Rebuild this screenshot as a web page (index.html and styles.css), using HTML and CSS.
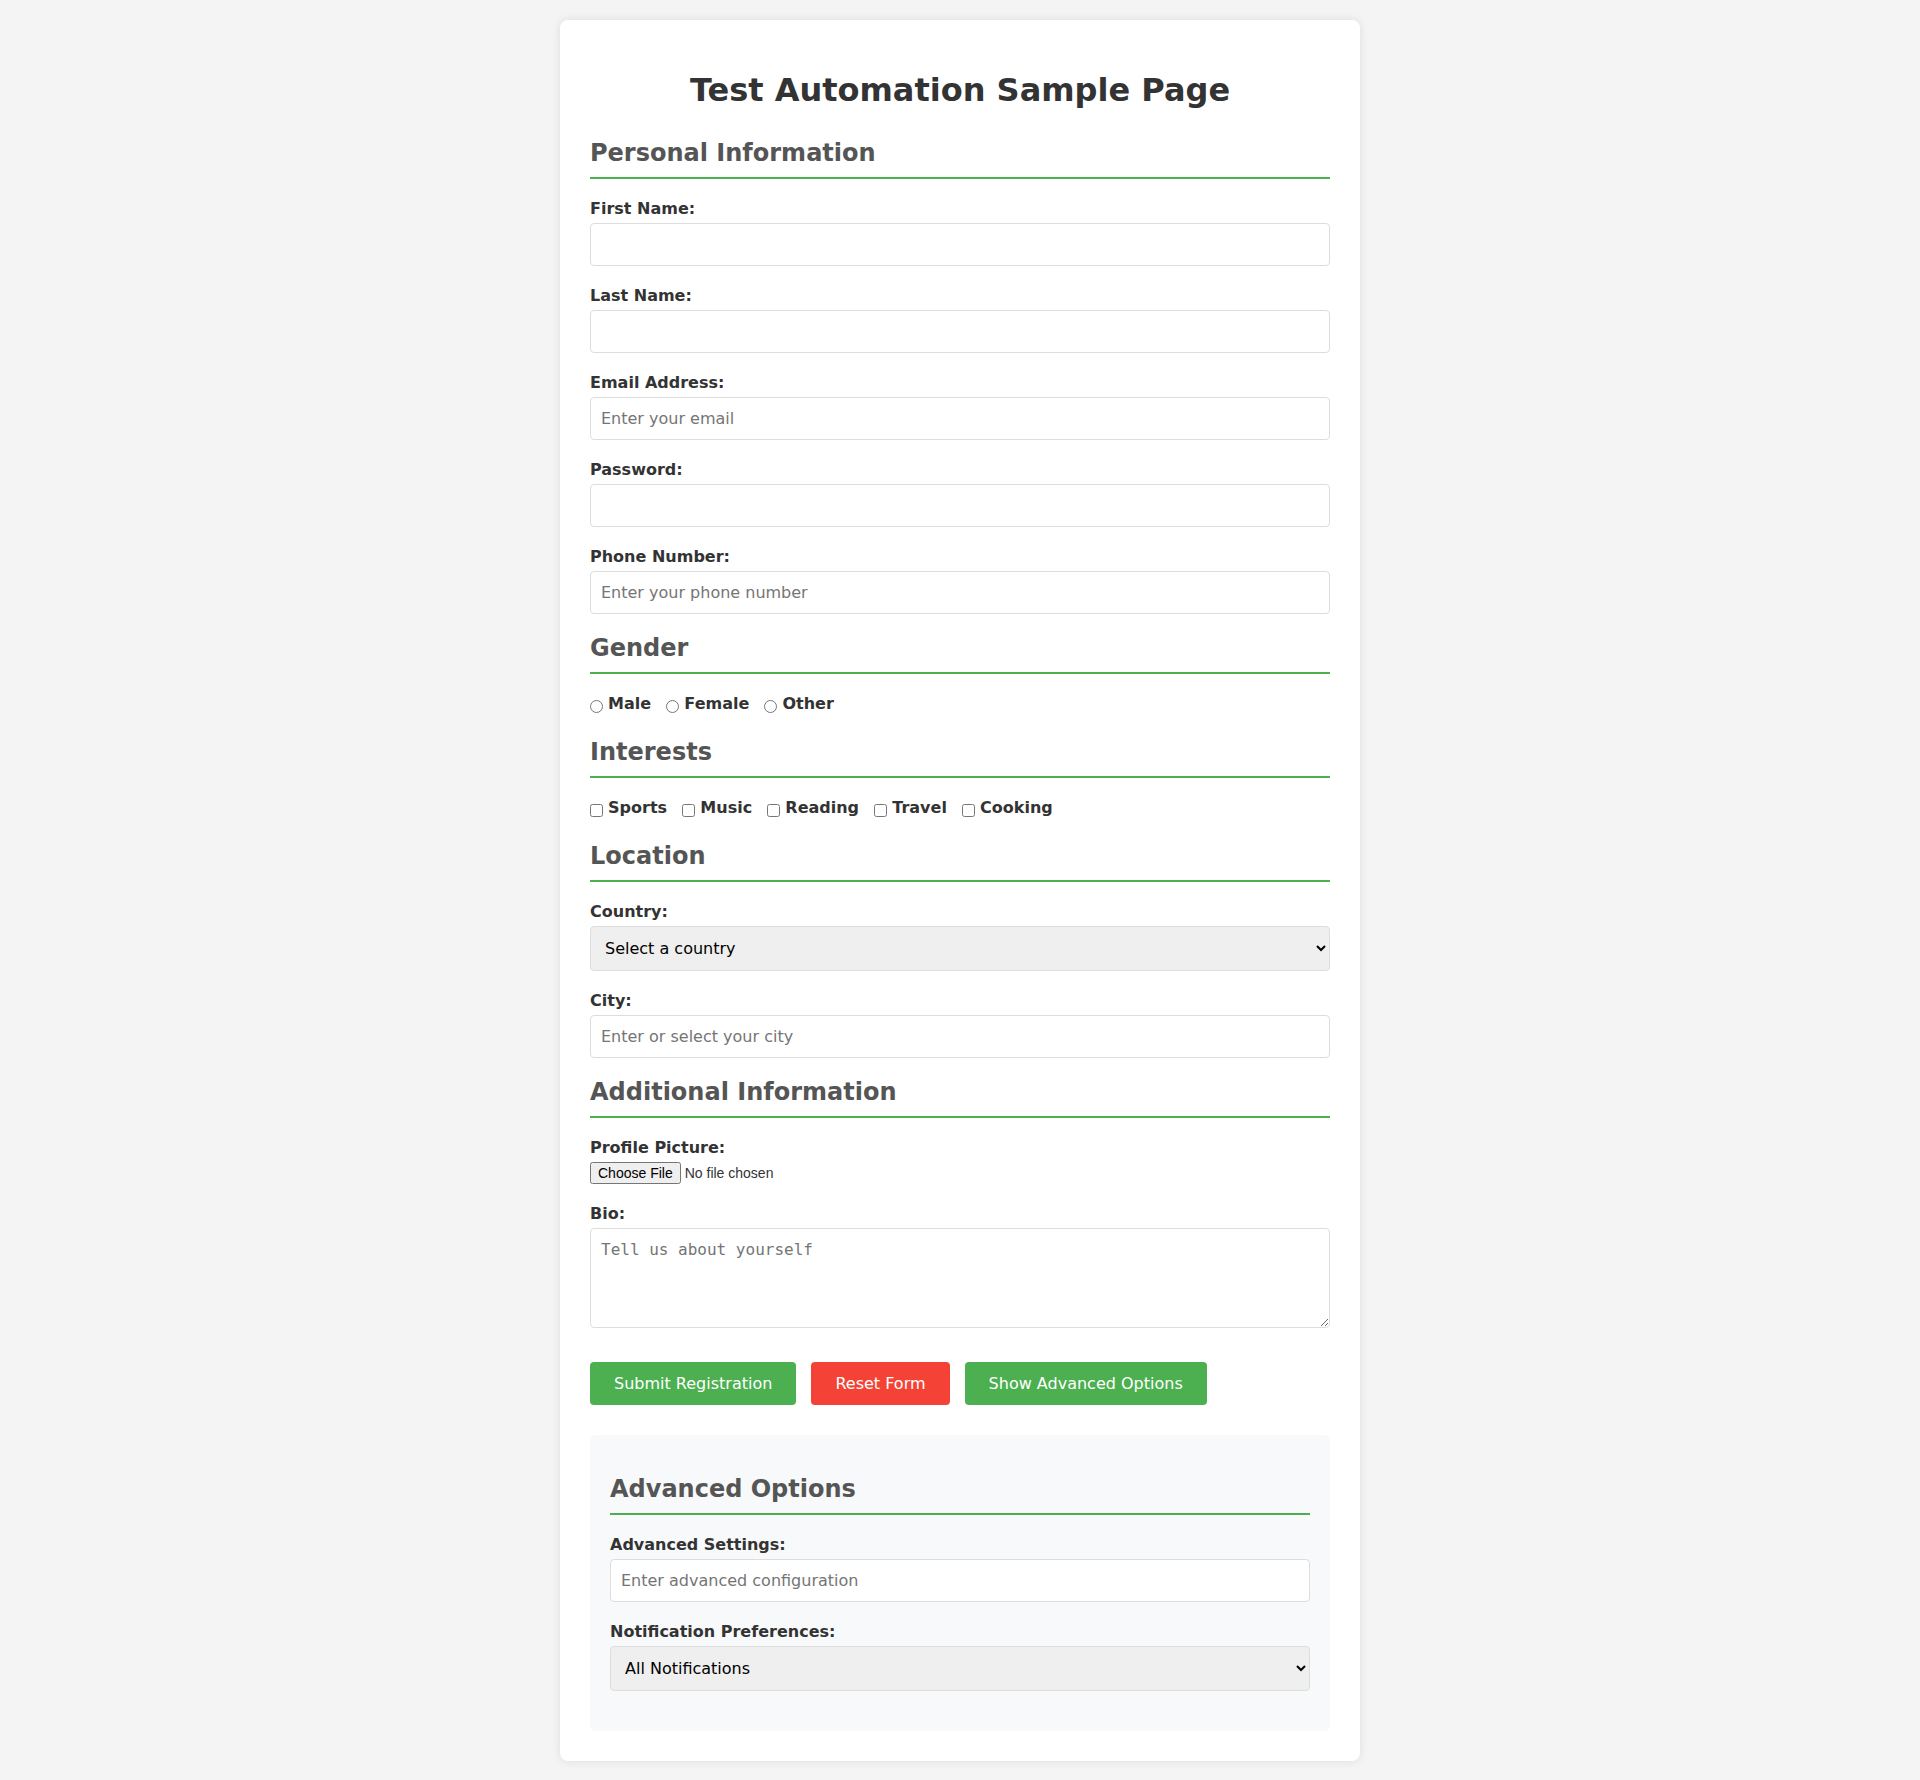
FILE: index.html
```html
<!DOCTYPE html>
<html lang="en">
<head>
<meta charset="utf-8">
<title>Test Automation Sample Page</title>
<link rel="stylesheet" href="styles.css">
</head>
<body>
<div class="container">
  <h1>Test Automation Sample Page</h1>
  <form>
    <h2>Personal Information</h2>
    <div class="form-group">
      <label for="firstName">First Name:</label>
      <input type="text" id="firstName">
    </div>
    <div class="form-group">
      <label for="lastName">Last Name:</label>
      <input type="text" id="lastName">
    </div>
    <div class="form-group">
      <label for="email">Email Address:</label>
      <input type="email" id="email" placeholder="Enter your email">
    </div>
    <div class="form-group">
      <label for="password">Password:</label>
      <input type="password" id="password">
    </div>
    <div class="form-group">
      <label for="phone">Phone Number:</label>
      <input type="tel" id="phone" placeholder="Enter your phone number">
    </div>

    <h2>Gender</h2>
    <div class="options">
      <input type="radio" name="gender" id="male"> <label for="male">Male</label>
      <input type="radio" name="gender" id="female"> <label for="female">Female</label>
      <input type="radio" name="gender" id="other"> <label for="other">Other</label>
    </div>

    <h2>Interests</h2>
    <div class="options">
      <input type="checkbox" id="sports"> <label for="sports">Sports</label>
      <input type="checkbox" id="music"> <label for="music">Music</label>
      <input type="checkbox" id="reading"> <label for="reading">Reading</label>
      <input type="checkbox" id="travel"> <label for="travel">Travel</label>
      <input type="checkbox" id="cooking"> <label for="cooking">Cooking</label>
    </div>

    <h2>Location</h2>
    <div class="form-group">
      <label for="country">Country:</label>
      <select id="country">
        <option>Select a country</option>
        <option>United States</option>
        <option>Canada</option>
        <option>United Kingdom</option>
      </select>
    </div>
    <div class="form-group">
      <label for="city">City:</label>
      <input type="text" id="city" placeholder="Enter or select your city">
    </div>

    <h2>Additional Information</h2>
    <div class="form-group">
      <label for="profilePic">Profile Picture:</label>
      <input type="file" id="profilePic" class="file-input">
    </div>
    <div class="form-group">
      <label for="bio">Bio:</label>
      <textarea id="bio" rows="4" placeholder="Tell us about yourself"></textarea>
    </div>

    <div class="buttons">
      <button type="button" class="btn">Submit Registration</button>
      <button type="button" class="btn btn-danger">Reset Form</button>
      <button type="button" class="btn">Show Advanced Options</button>
    </div>

    <div class="advanced">
      <h2>Advanced Options</h2>
      <div class="form-group">
        <label for="advSettings">Advanced Settings:</label>
        <input type="text" id="advSettings" placeholder="Enter advanced configuration">
      </div>
      <div class="form-group">
        <label for="notify">Notification Preferences:</label>
        <select id="notify">
          <option>All Notifications</option>
          <option>Important Only</option>
          <option>None</option>
        </select>
      </div>
    </div>
  </form>
</div>
</body>
</html>
```

FILE: styles.css
```css
body {
  margin: 0;
  padding: 20px;
  background: #f4f4f4;
  font-family: "DejaVu Sans", sans-serif;
  font-size: 16px;
  color: #333;
}

.container {
  width: 740px;
  margin: 0 auto;
  padding: 30px;
  background: #fff;
  border-radius: 8px;
  box-shadow: 0 0 10px rgba(0, 0, 0, 0.1);
}

h1 {
  font-size: 32px;
  text-align: center;
  color: #333;
  margin: 21.44px 0 30px;
}

h2 {
  font-size: 24px;
  color: #555;
  margin: 19.92px 0 20px;
  padding-bottom: 10px;
  border-bottom: 2px solid #4CAF50;
}

.form-group {
  margin-bottom: 20px;
}

.form-group label {
  display: block;
  font-weight: bold;
  margin-bottom: 5px;
  color: #333;
}

input[type="text"],
input[type="email"],
input[type="password"],
input[type="tel"],
select,
textarea {
  width: 100%;
  box-sizing: border-box;
  padding: 11px 10px;
  border: 1px solid #ddd;
  border-radius: 4px;
  font-family: "DejaVu Sans", sans-serif;
  font-size: 16px;
}

textarea {
  font-family: "DejaVu Sans Mono", monospace;
}

.file-input {
  font-size: 14px;
}

.options {
  margin-bottom: 25px;
}

.options input {
  margin: 3px 0 0 0;
  vertical-align: middle;
}

.options label {
  font-weight: bold;
  margin-right: 10px;
}

.buttons {
  margin-top: 30px;
}

.btn {
  background: #4CAF50;
  color: #fff;
  border: none;
  border-radius: 4px;
  padding: 12px 24px;
  font-family: "DejaVu Sans", sans-serif;
  font-size: 16px;
  margin-right: 10px;
  cursor: pointer;
}

.btn-danger {
  background: #f44336;
}

.advanced {
  margin-top: 30px;
  padding: 20px;
  background: #f8f9fa;
  border-radius: 5px;
}
```
